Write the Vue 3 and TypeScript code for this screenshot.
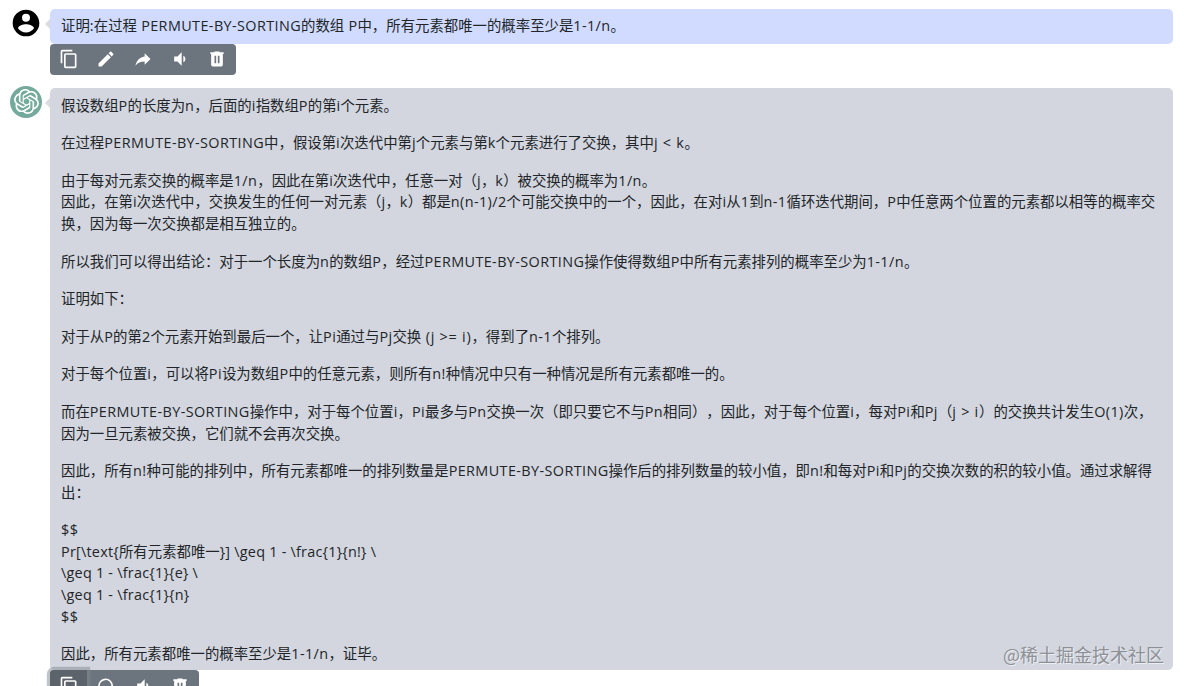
<script setup lang="ts">
interface Run {
  text: string
  kind: string
}

const icons: Record<string, string> = {
  copy: 'M19,21H8V7H19M19,5H8A2,2 0 0,0 6,7V21A2,2 0 0,0 8,23H19A2,2 0 0,0 21,21V7A2,2 0 0,0 19,5M16,1H4A2,2 0 0,0 2,3V17H4V3H16V1Z',
  edit: 'M20.71,7.04C21.1,6.65 21.1,6 20.71,5.63L18.37,3.29C18,2.9 17.35,2.9 16.96,3.29L15.12,5.12L18.87,8.87M3,17.25V21H6.75L17.81,9.93L14.06,6.18L3,17.25Z',
  share: 'M21,12L14,5V9C7,10 4,15 3,20C5.5,16.5 9,14.9 14,14.9V19L21,12Z',
  sound: 'M5,9V15H9L14,20V4L9,9M18.5,12C18.5,10.23 17.5,8.71 16,7.97V16C17.5,15.29 18.5,13.76 18.5,12Z',
  trash: 'M9,3V4H4V6H5V19A2,2 0 0,0 7,21H17A2,2 0 0,0 19,19V6H20V4H15V3H9M9,8H11V17H9V8M13,8H15V17H13V8Z',
  reload: 'M2.5,12A9,9 0 0,1 20.5,12C20.5,14.5 19.5,16.7 17.9,18.3L20.5,21H13.5V14L16.4,16.9A7,7 0 1,0 7.5,17.7L6.4,19.4A9,9 0 0,1 2.5,12Z',
}

const userTools = ['copy', 'edit', 'share', 'sound', 'trash']
const replyTools = ['copy', 'reload', 'sound', 'trash']

const question = '证明:在过程 PERMUTE-BY-SORTING的数组 P中，所有元素都唯一的概率至少是1-1/n。'

const paragraphs: string[][] = [
  ['假设数组P的长度为n，后面的i指数组P的第i个元素。'],
  ['在过程PERMUTE-BY-SORTING中，假设第i次迭代中第j个元素与第k个元素进行了交换，其中j < k。'],
  [
    '由于每对元素交换的概率是1/n，因此在第i次迭代中，任意一对（j，k）被交换的概率为1/n。',
    '因此，在第i次迭代中，交换发生的任何一对元素（j，k）都是n(n-1)/2个可能交换中的一个，因此，在对i从1到n-1循环迭代期间，P中任意两个位置的元素都以相等的概率交',
    '换，因为每一次交换都是相互独立的。',
  ],
  ['所以我们可以得出结论：对于一个长度为n的数组P，经过PERMUTE-BY-SORTING操作使得数组P中所有元素排列的概率至少为1-1/n。'],
  ['证明如下：'],
  ['对于从P的第2个元素开始到最后一个，让Pi通过与Pj交换 (j >= i)，得到了n-1个排列。'],
  ['对于每个位置i，可以将Pi设为数组P中的任意元素，则所有n!种情况中只有一种情况是所有元素都唯一的。'],
  [
    '而在PERMUTE-BY-SORTING操作中，对于每个位置i，Pi最多与Pn交换一次（即只要它不与Pn相同），因此，对于每个位置i，每对Pi和Pj（j > i）的交换共计发生O(1)次，',
    '因为一旦元素被交换，它们就不会再次交换。',
  ],
  [
    '因此，所有n!种可能的排列中，所有元素都唯一的排列数量是PERMUTE-BY-SORTING操作后的排列数量的较小值，即n!和每对Pi和Pj的交换次数的积的较小值。通过求解得',
    '出：',
  ],
  [
    '$$',
    'Pr[\\text{所有元素都唯一}] \\geq 1 - \\frac{1}{n!} \\',
    '\\geq 1 - \\frac{1}{e} \\',
    '\\geq 1 - \\frac{1}{n}',
    '$$',
  ],
  ['因此，所有元素都唯一的概率至少是1-1/n，证毕。'],
]

function kindOf(text: string): string {
  if (!/^[\x20-\x7e]/.test(text)) return 'han'
  if (/[<>]/.test(text)) return 'latin relation'
  if (/[\\]/.test(text)) return 'latin formula'
  if (text.length === 1) return 'latin single'
  return 'latin'
}

function runs(line: string): Run[] {
  return (line.match(/[\x20-\x7e]+|[^\x20-\x7e]+/g) ?? []).map((text) => ({
    text,
    kind: kindOf(text),
  }))
}
</script>

<template>
  <main class="chat">
    <section class="message">
      <svg class="avatar user" viewBox="0 0 24 24">
        <path d="M12,19.2C9.5,19.2 7.29,17.92 6,16C6.03,14 10,12.9 12,12.9C14,12.9 17.97,14 18,16C16.71,17.92 14.5,19.2 12,19.2M12,5A3,3 0 0,1 15,8A3,3 0 0,1 12,11A3,3 0 0,1 9,8A3,3 0 0,1 12,5M12,2A10,10 0 0,0 2,12A10,10 0 0,0 12,22A10,10 0 0,0 22,12C22,6.47 17.5,2 12,2Z" />
      </svg>
      <div class="body">
        <div class="bubble question">
          <p><span class="line"><span v-for="(r, k) in runs(question)" :key="k" :class="r.kind">{{ r.text }}</span></span></p>
        </div>
        <div class="tools raised">
          <button v-for="t in userTools" :key="t" type="button">
            <svg viewBox="0 0 24 24"><path :d="icons[t]" /></svg>
          </button>
        </div>
      </div>
    </section>

    <section class="message reply">
      <div class="avatar bot">
        <svg viewBox="0 0 24 24">
          <path d="M22.2819 9.8211a5.9847 5.9847 0 0 0-.5157-4.9108 6.0462 6.0462 0 0 0-6.5098-2.9A6.0651 6.0651 0 0 0 4.9807 4.1818a5.9847 5.9847 0 0 0-3.9977 2.9 6.0462 6.0462 0 0 0 .7427 7.0966 5.98 5.98 0 0 0 .511 4.9107 6.051 6.051 0 0 0 6.5146 2.9001A5.9847 5.9847 0 0 0 13.2599 24a6.0557 6.0557 0 0 0 5.7718-4.2058 5.9894 5.9894 0 0 0 3.9977-2.9001 6.0557 6.0557 0 0 0-.7475-7.0729zm-9.022 12.6081a4.4755 4.4755 0 0 1-2.8764-1.0408l.1419-.0804 4.7783-2.7582a.7948.7948 0 0 0 .3927-.6813v-6.7369l2.02 1.1686a.071.071 0 0 1 .038.052v5.5826a4.504 4.504 0 0 1-4.4945 4.4944zm-9.6607-4.1254a4.4708 4.4708 0 0 1-.5346-3.0137l.142.0852 4.783 2.7582a.7712.7712 0 0 0 .7806 0l5.8428-3.3685v2.3324a.0804.0804 0 0 1-.0332.0615L9.74 19.9502a4.4992 4.4992 0 0 1-6.1408-1.6464zM2.3408 7.8956a4.485 4.485 0 0 1 2.3655-1.9728V11.6a.7664.7664 0 0 0 .3879.6765l5.8144 3.3543-2.0201 1.1685a.0757.0757 0 0 1-.071 0l-4.8303-2.7865A4.504 4.504 0 0 1 2.3408 7.872zm16.5963 3.8558L13.1038 8.364 15.1192 7.2a.0757.0757 0 0 1 .071 0l4.8303 2.7913a4.4944 4.4944 0 0 1-.6765 8.1042v-5.6772a.79.79 0 0 0-.407-.667zm2.0107-3.0231l-.142-.0852-4.7735-2.7818a.7759.7759 0 0 0-.7854 0L9.409 9.2297V6.8974a.0662.0662 0 0 1 .0284-.0615l4.8303-2.7866a4.4992 4.4992 0 0 1 6.6802 4.66zM8.3065 12.863l-2.02-1.1638a.0804.0804 0 0 1-.038-.0567V6.0742a4.4992 4.4992 0 0 1 7.3757-3.4537l-.142.0805L8.704 5.459a.7948.7948 0 0 0-.3927.6813zm1.0976-2.3654l2.602-1.4998 2.6069 1.4998v2.9994l-2.5974 1.4997-2.6067-1.4997Z" />
        </svg>
      </div>
      <div class="body">
        <div class="bubble answer">
          <p v-for="(lines, i) in paragraphs" :key="i">
            <span v-for="(line, j) in lines" :key="j" class="line"><span v-for="(r, k) in runs(line)" :key="k" :class="r.kind">{{ r.text }}</span></span>
          </p>
          <span class="watermark">@稀土掘金技术社区</span>
        </div>
        <div class="tools">
          <button v-for="(t, i) in replyTools" :key="t" type="button" :class="{ focused: i === 0 }">
            <svg viewBox="0 0 24 24"><path :d="icons[t]" /></svg>
          </button>
        </div>
      </div>
    </section>
  </main>
</template>

<style>
body {
  background: #fff;
  overflow: hidden;
}
</style>

<style scoped>
.chat {
  box-sizing: border-box;
  height: 686px;
  overflow: hidden;
  padding: 9px 11px 0 10px;
  font-family: "Noto Sans CJK SC", sans-serif;
  font-size: 14.4px;
  line-height: 21.6px;
  text-spacing-trim: space-all;
  color: #212529;
}
.message {
  display: flex;
  gap: 8px;
}
.reply {
  margin-top: 12.4px;
}
.avatar {
  flex: none;
  width: 32px;
  height: 32px;
}
.user {
  margin-top: -2px;
}
.bot {
  display: flex;
  align-items: center;
  justify-content: center;
  margin-top: -2px;
  border-radius: 50%;
  background: #74aa9c;
}
.bot svg {
  width: 25px;
  height: 25px;
  fill: #fff;
}
.body {
  flex: 1;
  min-width: 0;
}
.bubble {
  position: relative;
  border-radius: 5px;
}
.bubble::before {
  content: "";
  position: absolute;
  left: -5px;
  top: 10px;
  border: 5px solid transparent;
  border-left: 0;
  border-right-color: #d9dbe0;
}
.question {
  padding: 5.4px 11px 8px;
  background: #d0dbff;
}
.answer {
  padding: 5.7px 11px 6.4px;
  background: #d3d6de;
}
p {
  margin: 0 0 16px;
}
.question p,
p:last-of-type {
  margin-bottom: 0;
}
.line {
  display: block;
  height: 21.6px;
  white-space: pre;
}
.latin {
  font-family: "Open Sans", sans-serif;
  letter-spacing: 0.4px;
}
.single {
  letter-spacing: 0.25px;
}
.formula {
  letter-spacing: 0.24px;
}
.relation {
  letter-spacing: 0.75px;
}
.tools {
  position: relative;
  display: flex;
  width: max-content;
  border-radius: 4px;
  background: #6c757d;
}
button {
  display: flex;
  align-items: center;
  justify-content: center;
  width: 37.2px;
  height: 31.5px;
  padding: 0;
  border: 0;
  background: transparent;
}
.raised button {
  padding-bottom: 1.5px;
}
button svg {
  width: 20px;
  height: 20px;
  fill: #fff;
}
.focused {
  border-radius: 4px 0 0 4px;
  background: #5c636a;
  box-shadow: 0 0 0 3.2px rgba(130, 138, 145, 0.5);
}
.watermark {
  position: absolute;
  right: 9px;
  bottom: 3.8px;
  font-size: 18px;
  line-height: 24px;
  color: #8d9097;
  text-shadow: 1px 1px 0 #eceef2;
}
</style>
